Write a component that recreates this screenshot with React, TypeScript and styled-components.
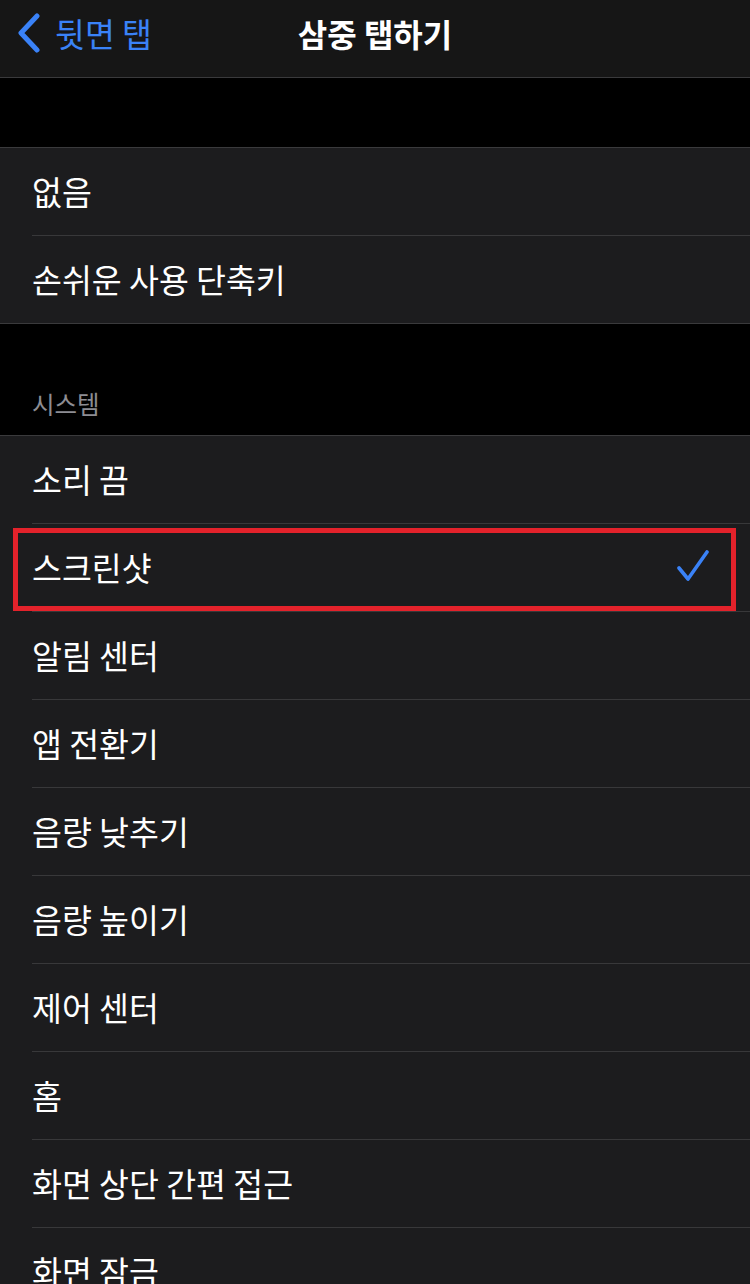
import React from "react";
import styled, { createGlobalStyle } from "styled-components";

const GlobalStyle = createGlobalStyle`
  html, body {
    margin: 0;
    padding: 0;
    background: #000000;
    overflow: hidden;
  }
  body {
    font-family: "Noto Sans CJK KR", "Noto Sans", sans-serif;
    -webkit-font-smoothing: antialiased;
  }
`

const Screen = styled.div`
  width: 750px;
  height: 1284px;
  overflow: hidden;
  background: #000000;
`

const NavBar = styled.div`
  height: 78px;
  box-sizing: border-box;
  background: #161616;
  border-bottom: 1px solid #3a3a3c;
  display: grid;
  grid-template-columns: 1fr auto 1fr;
  align-items: start;
  padding-top: 10px;
`

const BackButton = styled.div`
  display: flex;
  align-items: center;
  gap: 14px;
  padding-left: 17px;
  color: #3a82f7;
  font-size: 32.5px;
  line-height: 46px;
`

const NavTitle = styled.div`
  color: #ffffff;
  font-size: 32px;
  font-weight: 700;
  line-height: 46px;
`

const Gap = styled.div<{ $h: number }>`
  height: ${(p) => p.$h}px;
`

const SectionHeader = styled.div`
  height: 111px;
  box-sizing: border-box;
  display: flex;
  align-items: flex-end;
  padding: 0 32px 14px;
  color: #8d8d93;
  font-size: 24.5px;
`

const Group = styled.div`
  background: #1c1c1e;
  border-top: 1px solid #3a3a3c;
  border-bottom: 1px solid #3a3a3c;
`

const Item = styled.div`
  position: relative;
  padding-left: 32px;
  &:last-child > div {
    border-bottom: none;
  }
`

const ItemInner = styled.div`
  height: 84px;
  padding-bottom: 3px;
  display: flex;
  align-items: center;
  justify-content: space-between;
  padding-right: 40px;
  border-bottom: 1px solid #38383a;
  color: #ffffff;
  font-size: 32.5px;
`

const Highlight = styled.span`
  position: absolute;
  left: 13px;
  top: 4px;
  width: 723px;
  height: 83px;
  box-sizing: border-box;
  border: 5px solid #e3222b;
  pointer-events: none;
`

const Chevron = () => (
  <svg width="24" height="40" viewBox="0 0 24 40" fill="none">
    <path d="M20 3 L4 20 L20 37" stroke="#3a82f7" strokeWidth="5" strokeLinecap="round" strokeLinejoin="round" />
  </svg>
)

const Check = () => (
  <svg width="34" height="32" viewBox="0 0 34 32" fill="none">
    <path d="M3 18 L12 29 L31 2" stroke="#3a82f7" strokeWidth="3.6" strokeLinecap="round" strokeLinejoin="round" />
  </svg>
)

const topItems = ["없음", "손쉬운 사용 단축키"]
const systemItems = [
  "소리 끔",
  "스크린샷",
  "알림 센터",
  "앱 전환기",
  "음량 낮추기",
  "음량 높이기",
  "제어 센터",
  "홈",
  "화면 상단 간편 접근",
  "화면 잠금",
]

const App: React.FC = () => {
  return (
    <Screen>
      <GlobalStyle />
      <NavBar>
        <BackButton>
          <Chevron />
          <span>뒷면 탭</span>
        </BackButton>
        <NavTitle>삼중 탭하기</NavTitle>
        <div />
      </NavBar>
      <Gap $h={69} />
      <Group>
        {topItems.map((label) => (
          <Item key={label}>
            <ItemInner>{label}</ItemInner>
          </Item>
        ))}
      </Group>
      <SectionHeader>시스템</SectionHeader>
      <Group>
        {systemItems.map((label) => (
          <Item key={label}>
            <ItemInner>
              {label}
              {label === "스크린샷" && <Check />}
            </ItemInner>
            {label === "스크린샷" && <Highlight />}
          </Item>
        ))}
      </Group>
    </Screen>
  );
};

export default App;
